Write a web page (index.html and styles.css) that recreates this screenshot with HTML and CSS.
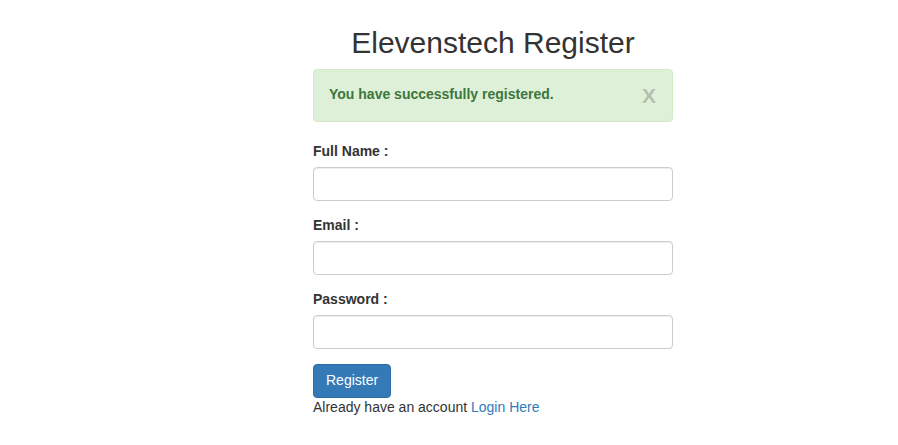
FILE: index.html
```html
<!DOCTYPE html>
<html lang="en">
<head>
<meta charset="utf-8">
<title>Elevenstech Register</title>
<link rel="stylesheet" href="styles.css">
</head>
<body>
<div class="page">
  <div class="col">
    <h2 class="title">Elevenstech Register</h2>
    <div class="alert">
      <strong>You have successfully registered.</strong>
      <span class="close">X</span>
    </div>
    <form class="form">
      <div class="form-group">
        <label class="label">Full Name :</label>
        <input class="input" type="text">
      </div>
      <div class="form-group">
        <label class="label">Email :</label>
        <input class="input" type="text">
      </div>
      <div class="form-group">
        <label class="label">Password :</label>
        <input class="input" type="password">
      </div>
      <button class="btn" type="button">Register</button>
      <div class="note">Already have an account <a class="link" href="#">Login Here</a></div>
    </form>
  </div>
</div>
</body>
</html>
```
FILE: styles.css
```css
* { box-sizing: border-box; }
html, body { margin: 0; padding: 0; background: #fff; }
body {
  font-family: "Liberation Sans", Arial, Helvetica, sans-serif;
  font-size: 14px;
  line-height: 1.42857;
  color: #333;
}
.page { display: flex; }
.col { width: 360px; margin-left: 313px; }
.title {
  font-size: 30px;
  font-weight: 500;
  line-height: 1.1;
  margin: 26px 0 10px;
  text-align: center;
  color: #333;
}
.alert {
  display: flex;
  justify-content: space-between;
  align-items: flex-start;
  padding: 15px 15px 15px 15px;
  margin-bottom: 20px;
  border: 1px solid #d6e9c6;
  border-radius: 4px;
  background: #dff0d8;
  color: #3c763d;
}
.alert strong { font-weight: bold; }
.close {
  font-size: 21px;
  font-weight: bold;
  line-height: 1;
  color: #000;
  opacity: 0.2;
  text-shadow: 0 1px 0 #fff;
  margin-right: 1px;
}
.form { margin: 0; }
.form-group { margin-bottom: 15px; }
.label {
  display: block;
  font-weight: bold;
  margin-bottom: 5px;
}
.input {
  display: block;
  width: 100%;
  height: 34px;
  padding: 6px 12px;
  font: inherit;
  color: #555;
  background: #fff;
  border: 1px solid #ccc;
  border-radius: 4px;
  box-shadow: inset 0 1px 1px rgba(0,0,0,.075);
}
.btn {
  display: block;
  padding: 6px 12px;
  font: inherit;
  line-height: 1.42857;
  color: #fff;
  background: #337ab7;
  border: 1px solid #2e6da4;
  border-radius: 4px;
  cursor: pointer;
}
.link { color: #337ab7; text-decoration: none; }
```
